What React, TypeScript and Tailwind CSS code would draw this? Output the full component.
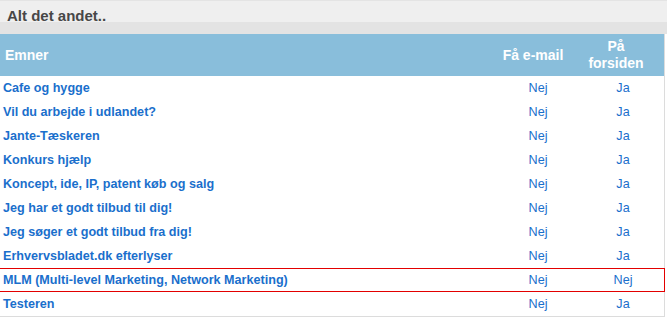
import React from 'react';

type Row = { title: string; email: string; front: string; marked?: boolean };

const rows: Row[] = [
    { title: 'Cafe og hygge', email: 'Nej', front: 'Ja' },
    { title: 'Vil du arbejde i udlandet?', email: 'Nej', front: 'Ja' },
    { title: 'Jante-Tæskeren', email: 'Nej', front: 'Ja' },
    { title: 'Konkurs hjælp', email: 'Nej', front: 'Ja' },
    { title: 'Koncept, ide, IP, patent køb og salg', email: 'Nej', front: 'Ja' },
    { title: 'Jeg har et godt tilbud til dig!', email: 'Nej', front: 'Ja' },
    { title: 'Jeg søger et godt tilbud fra dig!', email: 'Nej', front: 'Ja' },
    { title: 'Erhvervsbladet.dk efterlyser', email: 'Nej', front: 'Ja' },
    { title: 'MLM (Multi-level Marketing, Network Marketing)', email: 'Nej', front: 'Nej', marked: true },
    { title: 'Testeren', email: 'Nej', front: 'Ja' },
];

const App: React.FC = () => {
    return (
        <div className="w-[667px] h-[317px] bg-white font-['Liberation_Sans',Arial,sans-serif] overflow-hidden">
            <div className="h-[34px] bg-[#efefef] border-t border-[#e4e4e4] flex flex-col">
                <div className="h-[21px] flex items-end px-[7px]">
                    <span className="text-[15px] font-bold text-[#474747] leading-none translate-y-[1px]">Alt det andet..</span>
                </div>
                <div className="flex-1 bg-[#e3e3e3]" />
            </div>
            <div className="w-[665px] border-r border-b border-[#dcdcdc]">
                <div className="grid grid-cols-[1fr_88px_82px] h-[42px] bg-[#89bedb] text-white font-bold text-[14px] leading-[17px] items-center">
                    <div className="px-[5px]">Emner</div>
                    <div className="text-center pr-[10px]">Få e-mail</div>
                    <div className="text-center pr-[14px]">På<br />forsiden</div>
                </div>
                {rows.map((r) => (
                    <div
                        key={r.title}
                        className={
                            r.marked
                                ? 'grid grid-cols-[1fr_88px_82px] h-[24px] items-center text-[12.6px] text-[#1a6fcc] border border-[#e30000] -mx-px'
                                : 'grid grid-cols-[1fr_88px_82px] h-[24px] items-center text-[12.6px] text-[#1a6fcc]'
                        }
                    >
                        <div className="px-[3px] font-bold">{r.title}</div>
                        <div className="text-center">{r.email}</div>
                        <div className="text-center">{r.front}</div>
                    </div>
                ))}
            </div>
        </div>
    );
};

export default App;
